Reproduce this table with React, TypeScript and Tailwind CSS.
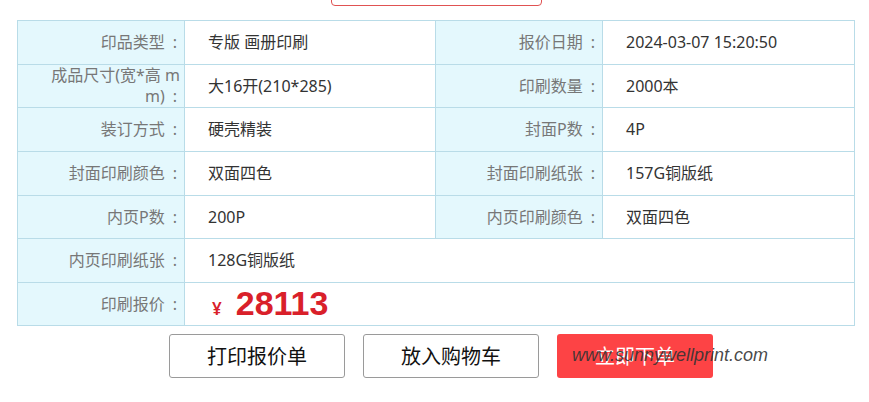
import React from 'react';

type Cell = { label: string; value: React.ReactNode };

const rows: { h: string; cells: Cell[] }[] = [
  { h: 'h-[44px]', cells: [{ label: '印品类型', value: '专版 画册印刷' }, { label: '报价日期', value: '2024-03-07 15:20:50' }] },
  { h: 'h-[43px]', cells: [{ label: '成品尺寸(宽*高 mm)', value: '大16开(210*285)' }, { label: '印刷数量', value: '2000本' }] },
  { h: 'h-[44px]', cells: [{ label: '装订方式', value: '硬壳精装' }, { label: '封面P数', value: '4P' }] },
  { h: 'h-[44px]', cells: [{ label: '封面印刷颜色', value: '双面四色' }, { label: '封面印刷纸张', value: '157G铜版纸' }] },
  { h: 'h-[43px]', cells: [{ label: '内页P数', value: '200P' }, { label: '内页印刷颜色', value: '双面四色' }] },
];

const font = { fontFamily: '"Noto Sans", "Noto Sans CJK SC", sans-serif' };

const Label: React.FC<{ children: React.ReactNode }> = ({ children }) => (
  <td className="w-[167px] break-all border border-[#b9dce8] bg-[#e4f8fd] pl-[26px] pr-[4px] text-right text-[16px] leading-[21px] text-[#777]">
    {children}
    <span className="pl-[8px] pr-[3px]">:</span>
  </td>
);

const Value: React.FC<{ children: React.ReactNode; colSpan?: number }> = ({ children, colSpan }) => (
  <td colSpan={colSpan} className="border border-[#b9dce8] bg-white px-[23px] text-[16px] leading-[21px] text-[#333]">
    {children}
  </td>
);

export default function App() {
  return (
    <div className="relative h-[402px] w-[869px] overflow-hidden bg-white" style={font}>
      <div className="flex h-[20px] items-start">
        <div className="ml-[331px] -mt-[24px] h-[30px] w-[211px] rounded-[4px] border border-[#e05252]" />
      </div>

      <table className="ml-[17px] w-[837px] table-fixed border-collapse">
        <colgroup>
          <col className="w-[167px]" />
          <col className="w-[251px]" />
          <col className="w-[167px]" />
          <col className="w-[252px]" />
        </colgroup>
        <tbody>
          {rows.map((r, i) => (
            <tr key={i} className={r.h}>
              <Label>{r.cells[0].label}</Label>
              <Value>{r.cells[0].value}</Value>
              <Label>{r.cells[1].label}</Label>
              <Value>{r.cells[1].value}</Value>
            </tr>
          ))}
          <tr className="h-[44px]">
            <Label>内页印刷纸张</Label>
            <Value colSpan={3}>128G铜版纸</Value>
          </tr>
          <tr className="h-[43px]">
            <Label>印刷报价</Label>
            <Value colSpan={3}>
              <span className="inline-flex items-baseline text-[#d9202a]">
                <span className="pl-[4px] pr-[14px] text-[17px] font-semibold">¥</span>
                <span className="text-[34px] font-bold leading-[30px]" style={{ fontFamily: '"Liberation Sans", Arial, sans-serif' }}>28113</span>
              </span>
            </Value>
          </tr>
        </tbody>
      </table>

      <div className="mt-[8px] flex gap-[18px] pl-[169px]" style={{ fontFamily: '"Noto Sans CJK SC", sans-serif' }}>
        <button className="h-[44px] w-[176px] rounded-[3px] border border-[#9a9a9a] bg-white text-[20px] text-[#111]">打印报价单</button>
        <button className="h-[44px] w-[176px] rounded-[3px] border border-[#9a9a9a] bg-white text-[20px] text-[#111]">放入购物车</button>
        <button className="h-[44px] w-[156px] rounded-[3px] bg-[#fd4345] text-[20px] text-white">立即下单</button>
      </div>

      <div
        className="pointer-events-none absolute left-[572px] top-[346px] text-[18px] leading-[18px] italic text-[#333]/90"
        style={{ fontFamily: '"Liberation Sans", Arial, sans-serif' }}
      >
        www.sunnywellprint.com
      </div>
    </div>
  );
}
